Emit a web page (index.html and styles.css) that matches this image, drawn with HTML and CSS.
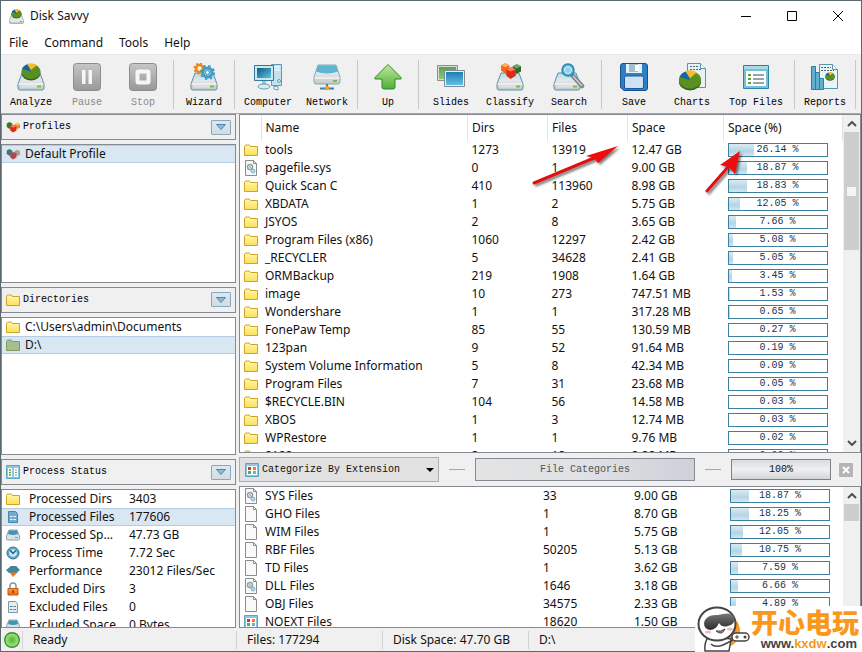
FILE: index.html
```html
<!DOCTYPE html>
<html lang="en">
<head>
    <meta charset="UTF-8">
    <meta name="viewport" content="width=device-width, initial-scale=1.0">
    <title>Disk Savvy</title>
    <link rel="stylesheet" href="styles.css">
</head>
<body>

<!-- Icon set -->
<svg class="sprite" aria-hidden="true">
    <defs>
        <linearGradient id="g-disk" x1="0" y1="0" x2="0" y2="1"><stop offset="0" stop-color="#b4dcea"/><stop offset="0.45" stop-color="#e4e6e8"/><stop offset="1" stop-color="#c4c8cb"/></linearGradient>
        <linearGradient id="g-gray" x1="0" y1="0" x2="0" y2="1"><stop offset="0" stop-color="#c6c6c6"/><stop offset="1" stop-color="#989898"/></linearGradient>
        <linearGradient id="g-blue" x1="0" y1="0" x2="1" y2="1"><stop offset="0" stop-color="#0d5c86"/><stop offset="1" stop-color="#5fc0e0"/></linearGradient>
        <linearGradient id="g-sky" x1="0" y1="0" x2="0" y2="1"><stop offset="0" stop-color="#1d7fb5"/><stop offset="1" stop-color="#62bfe4"/></linearGradient>
        <linearGradient id="g-leaf" x1="0" y1="0" x2="0" y2="1"><stop offset="0" stop-color="#5ba344"/><stop offset="1" stop-color="#8cc878"/></linearGradient>
        <linearGradient id="g-green" x1="0" y1="0" x2="0" y2="1"><stop offset="0" stop-color="#c4e8a0"/><stop offset="1" stop-color="#4db03a"/></linearGradient>
        <linearGradient id="g-folder" x1="0" y1="0" x2="0" y2="1"><stop offset="0" stop-color="#fff9b0"/><stop offset="1" stop-color="#fbe05c"/></linearGradient>
        <radialGradient id="g-ball"><stop offset="0" stop-color="#4dbb32"/><stop offset="1" stop-color="#a9e48d"/></radialGradient>
        <linearGradient id="g-lock" x1="0" y1="0" x2="0" y2="1"><stop offset="0" stop-color="#ffa23c"/><stop offset="1" stop-color="#e8650c"/></linearGradient>
        <linearGradient id="g-visor" x1="0" y1="0" x2="0" y2="1"><stop offset="0" stop-color="#777"/><stop offset="1" stop-color="#2c2c2c"/></linearGradient>
    </defs>

    <symbol id="disk" viewBox="0 0 28 28">
        <path d="M5 10h18l4 11v4q0 2-2 2H3q-2 0-2-2v-4z" fill="url(#g-disk)" stroke="#5794a8"/>
        <path d="M1.500 21h25" stroke="#fff"/>
        <path d="M4 22.500h20v2H4z" fill="#dfe3e5"/>
        <path d="M20 22.500h4v2h-4z" fill="#74c13a"/>
    </symbol>
    <symbol id="pie" viewBox="0 0 20 18">
        <ellipse cx="10" cy="10" rx="9.500" ry="7.500" fill="#38601a"/>
        <ellipse cx="10" cy="8.500" rx="9.500" ry="7.500" fill="#5a8f22"/>
        <path d="M10 8.500L1 6Q3 2 7 1z" fill="#1166a8"/>
        <path d="M10 7L6 1q5-2 10 1z" fill="#f8bb2e"/>
    </symbol>
    <symbol id="cubes" viewBox="0 0 20 16">
        <path d="M1 3l4-2 4 2v5l-4 3-4-3z" fill="#ee6b1c"/><path d="M1 3l4 2 4-2-4-2z" fill="#ffb35c"/>
        <path d="M12 4l4-2 4 2v5l-4 2-4-2z" fill="#2f6a2a"/><path d="M12 4l4 2 4-2-4-2z" fill="#6fa866"/>
        <path d="M6 7l5-2 4 2v6l-5 3-4-3z" fill="#dd2a16"/><path d="M6 7l4 2 5-2-4-2z" fill="#ff7a58"/>
    </symbol>

    <symbol id="analyze" viewBox="0 0 28 28"><use href="#disk"/><use href="#pie" x="4" y="0" width="20" height="18"/></symbol>
    <symbol id="pause" viewBox="0 0 28 28">
        <rect x="0.500" y="0.500" width="27" height="27" rx="3" fill="url(#g-gray)" stroke="#8e8e8e"/>
        <path d="M9 7h3.500v14H9zM15.500 7H19v14h-3.500z" fill="#f6f6f6"/>
    </symbol>
    <symbol id="stop" viewBox="0 0 28 28">
        <rect x="0.500" y="0.500" width="27" height="27" rx="3" fill="url(#g-gray)" stroke="#8e8e8e"/>
        <rect x="8.500" y="8.500" width="11" height="11" rx="1" fill="none" stroke="#f6f6f6" stroke-width="4"/>
    </symbol>
    <symbol id="wizard" viewBox="0 0 28 28">
        <use href="#disk"/>
        <circle cx="9.500" cy="5.500" r="3.500" fill="#fff0d8" stroke="#e9871e" stroke-width="2.500"/>
        <circle cx="9.500" cy="5.500" r="5" fill="none" stroke="#e9871e" stroke-width="2" stroke-dasharray="2 1.900"/>
        <circle cx="17.500" cy="9.500" r="4.500" fill="#c9edf8" stroke="#3d9cc8" stroke-width="3"/>
        <circle cx="17.500" cy="9.500" r="6.500" fill="none" stroke="#3d9cc8" stroke-width="2" stroke-dasharray="2.500 2.600"/>
        <circle cx="17.500" cy="9.500" r="2" fill="#fff" stroke="#2c7fab"/>
    </symbol>
    <symbol id="computer" viewBox="0 0 28 28">
        <path d="M17.500 1.500h10v21h-10z" fill="#c4e2ec" stroke="#5d9cb4"/>
        <path d="M19 4h7M19 7h7" stroke="#fff"/>
        <circle cx="25" cy="18" r="1.500" fill="#e8f6fa" stroke="#5d9cb4"/>
        <path d="M0.500 2.500h19v15h-19z" fill="#c9e8f2" stroke="#347a98"/>
        <path d="M3 5h14v10H3z" fill="url(#g-blue)"/>
        <path d="M8 18h4v4H8z" fill="#9cc6d4"/>
        <ellipse cx="10" cy="23.500" rx="6" ry="2.500" fill="#d8ebf1" stroke="#5d9cb4"/>
        <path d="M20 23l4 1v3l-4-1z" fill="#fff" stroke="#5d9cb4"/>
    </symbol>
    <symbol id="network" viewBox="0 0 28 28">
        <path d="M5 2h18l4 12v5q0 2-2 2H3q-2 0-2-2v-5z" fill="url(#g-disk)" stroke="#87a9b5"/>
        <path d="M5 2.500h18l2 6q-11 4-22 0z" fill="#5fb4d0"/>
        <path d="M1.500 15h25" stroke="#fff"/>
        <path d="M20 17h4v2h-4z" fill="#74c13a"/>
        <path d="M14 21v4M7 25.500h14" stroke="#2f86a8" stroke-width="2"/>
        <circle cx="14" cy="25" r="2.300" fill="#f39a31"/>
    </symbol>
    <symbol id="up" viewBox="0 0 28 28"><path d="M14 1.500L27 14.500v1.500h-6v8q0 2-2 2H10q-2 0-2-2v-8H1v-1.500z" fill="url(#g-green)" stroke="#2f8a1f" stroke-linejoin="round"/></symbol>
    <symbol id="slides" viewBox="0 0 28 28">
        <path d="M0.500 2.500h20v15h-20z" fill="#d8dcd8" stroke="#8c8f8c"/><path d="M2 4h17v12H2z" fill="url(#g-leaf)"/>
        <path d="M7.500 7.500h20v16h-20z" fill="#e8eef2" stroke="#7f8b93"/><path d="M9 9h17v13H9z" fill="url(#g-sky)"/>
    </symbol>
    <symbol id="classify" viewBox="0 0 28 28"><use href="#disk"/><use href="#cubes" x="4" y="-1" width="21" height="17"/></symbol>
    <symbol id="search" viewBox="0 0 32 28">
        <use href="#disk" width="28" height="28"/>
        <path d="M19 12l10 11" stroke="#7b858c" stroke-width="4.500" stroke-linecap="round"/>
        <path d="M20 13l9 10" stroke="#c7d0d5" stroke-width="1.500"/>
        <circle cx="15" cy="7" r="6" fill="#57b5d8" stroke="#2c88b0" stroke-width="1.500"/>
        <circle cx="15" cy="7" r="3.500" fill="#8cd3ea" stroke="#d8f1fa"/>
    </symbol>
    <symbol id="save" viewBox="0 0 28 28">
        <path d="M3 0.500h22q2.500 0 2.500 2.500v22q0 2.500-2.500 2.500H4l-3.500-3V3Q0.500 0.500 3 0.500z" fill="#2f7fc4" stroke="#174f8c"/>
        <path d="M6 1h16v9H6z" fill="#e4f1f6"/><path d="M9 1h9v8H9z" fill="#9fc0cc"/><path d="M15 2h4v6h-4z" fill="#fff"/>
        <rect x="4.500" y="13" width="19" height="12.500" rx="1.500" fill="#cfe2f5" stroke="#1c5a9c"/>
    </symbol>
    <symbol id="charts" viewBox="0 0 28 28">
        <path d="M9.500 0.500h13l5 5v19h-18z" fill="#e6f2f7" stroke="#5b93aa"/><path d="M22.500 0.500v5h5" fill="#fff" stroke="#5b93aa"/>
        <path d="M12 3.500h8M12 6.500h12" stroke="#4d6b7c" stroke-dasharray="2 1"/>
        <use href="#pie" x="0" y="7" width="24" height="21"/>
    </symbol>
    <symbol id="topfiles" viewBox="0 0 28 28">
        <path d="M1.500 2.500h25v23h-25z" fill="#79bfd8" stroke="#2a86a6"/><path d="M2 3h24v3H2z" fill="#a8dbea"/>
        <path d="M4 8h20v15H4z" fill="#fff"/>
        <path d="M6 12h3M6 16h3M6 20h3" stroke="#5aa52a" stroke-width="2"/>
        <path d="M11 12h11M11 16h11M11 20h11" stroke="#7b8794" stroke-width="1.500"/>
    </symbol>
    <symbol id="reports" viewBox="0 0 28 28">
        <path d="M8.500 1.500h13l5 5v19h-18z" fill="#e9f4f8" stroke="#5b93aa"/><path d="M21.500 1.500v5h5" fill="#fff" stroke="#5b93aa"/>
        <path d="M10 4.500h10M10 7.500h13" stroke="#4d6b7c" stroke-dasharray="2 1"/>
        <use href="#pie" x="14" y="9" width="10" height="9"/>
        <path d="M0.500 3.500h4v23h-4zM4.500 9.500h4v17h-4zM8.500 15.500h4v11h-4z" fill="#62aed0" stroke="#2f7c9e"/>
    </symbol>

    <symbol id="folder" viewBox="0 0 14 14"><path d="M0.500 3.500l1-1.500h4l1 1.500h7v9h-13z" fill="url(#g-folder)" stroke="#d2a21e"/></symbol>
    <symbol id="folder-sel" viewBox="0 0 14 14"><path d="M0.500 3.500l1-1.500h4l1 1.500h7v9h-13z" fill="#a7bd92" stroke="#7f9a5c"/></symbol>
    <symbol id="page" viewBox="0 0 14 16"><path d="M1.500 0.500h8l3 3v12h-11z" fill="#f9f9f9" stroke="#8c8c8c"/><path d="M9.500 0.500v3h3" fill="none" stroke="#8c8c8c"/></symbol>
    <symbol id="sysfile" viewBox="0 0 14 16">
        <use href="#page"/>
        <circle cx="6" cy="7" r="2.500" fill="none" stroke="#8fa0ab" stroke-width="1.500"/><circle cx="6" cy="7" r="0.800" fill="#71838f"/>
        <circle cx="9" cy="11" r="2" fill="#b5d8ea" stroke="#7fb2cc"/>
    </symbol>
    <symbol id="category" viewBox="0 0 14 14">
        <path d="M0.500 0.500h13v13h-13z" fill="#8fc8dd" stroke="#5aa5bf"/><path d="M2 3h10v9H2z" fill="#fff"/>
        <path d="M3 4h3v3H3z" fill="#d8322c"/><path d="M8 4h3v3H8z" fill="#f07c3a"/><path d="M3 8h3v3H3z" fill="#4fb83a"/><path d="M8 8h3v3H8z" fill="#7aa9ea"/>
    </symbol>
    <symbol id="columns" viewBox="0 0 14 14">
        <path d="M0.500 0.500h13v13h-13z" fill="#8fc8dd" stroke="#5aa5bf"/><path d="M2 3h4v9H2zM8 3h4v9H8z" fill="#fff"/>
        <path d="M3 5h2M3 7.500h2M3 10h2" stroke="#5aa52a" stroke-width="1.500"/><path d="M9 5h2M9 7.500h2M9 10h2" stroke="#8794a0"/>
    </symbol>
    <symbol id="doc-blue" viewBox="0 0 14 14"><path d="M2.500 1.500h7l2 2v9h-9z" fill="#74acd0" stroke="#4686ac"/><path d="M4 6.500h6M4 9.500h6" stroke="#eaf4fa" stroke-dasharray="2.500 1"/></symbol>
    <symbol id="doc-gray" viewBox="0 0 14 14"><path d="M2.500 1.500h7l2 2v9h-9z" fill="#e6edf1" stroke="#7d97a3"/><path d="M4 6.500h6M4 9.500h6" stroke="#5d7f90" stroke-dasharray="2.500 1"/></symbol>
    <symbol id="drive" viewBox="0 0 14 14"><path d="M3 2h8l2.500 6v3q0 1-1 1h-11q-1 0-1-1V8z" fill="#dce1e4" stroke="#8aa2ac"/><path d="M3 2.500h8l1 3.500q-5 2-10 0z" fill="#3f95b6"/><path d="M9 9.500h3" stroke="#6fbb38"/></symbol>
    <symbol id="clock" viewBox="0 0 14 14"><circle cx="7" cy="7" r="6" fill="#5aa9c8" stroke="#2f7594"/><circle cx="7" cy="7" r="3.800" fill="#cfeaf4"/><path d="M4 4l3 3.500L10 4.500" fill="none" stroke="#22617e" stroke-width="1.500"/></symbol>
    <symbol id="perf" viewBox="0 0 14 14"><path d="M3 8l4 5 5-5z" fill="#ee7b20"/><path d="M0 6l5-4h5l4 4-4 3-2-1-1 2-1-2-3 1z" fill="#3c86a6"/><path d="M5 2h5l1 2H4z" fill="#6c7478"/></symbol>
    <symbol id="lock" viewBox="0 0 14 14"><path d="M4 7V4q0-3 3-3t3 3v3" fill="none" stroke="#8b949a" stroke-width="1.500"/><path d="M2 6.500h10v6.500H2z" fill="url(#g-lock)" stroke="#c8580c"/><path d="M7 8v3" stroke="#7c3404" stroke-width="1.500"/></symbol>
    <symbol id="cubes-sel" viewBox="0 0 20 16">
        <path d="M1 3l4-2 4 2v5l-4 3-4-3z" fill="#3b7f6c"/><path d="M12 4l4-2 4 2v5l-4 2-4-2z" fill="#b49a82"/><path d="M6 7l5-2 4 2v6l-5 3-4-3z" fill="#b04a52"/>
    </symbol>
    <symbol id="cubes-small" viewBox="0 0 20 16">
        <path d="M1 3l4-2 4 2v5l-4 3-4-3z" fill="#2f7d2c"/><path d="M12 4l4-2 4 2v5l-4 2-4-2z" fill="#f08a24"/><path d="M12 4l4 2 4-2-4-2z" fill="#ffc070"/><path d="M6 7l5-2 4 2v6l-5 3-4-3z" fill="#dd2a16"/><path d="M6 7l4 2 5-2-4-2z" fill="#ff7a58"/>
    </symbol>
    <symbol id="ready" viewBox="0 0 16 16"><circle cx="8" cy="8" r="7.300" fill="url(#g-ball)" stroke="#3c8f2a" stroke-width="1.400"/><circle cx="8" cy="8" r="5" fill="none" stroke="#8fd873"/></symbol>
    <symbol id="chevron" viewBox="0 0 10 6"><path d="M0.500 0.500h9L5 5.500z" fill="#8fbbd8" stroke="#4f87ab"/></symbol>
</svg>

<div class="window">
    <header class="titlebar">
        <svg class="app-icon"><use href="#analyze"/></svg>
        <h1>Disk Savvy</h1>
        <div class="window-buttons">
            <button type="button" aria-label="Minimize"><svg viewBox="0 0 12 12"><path d="M1 6.500h10"/></svg></button>
            <button type="button" aria-label="Maximize"><svg viewBox="0 0 12 12"><path d="M1.500 1.500h9v9h-9z"/></svg></button>
            <button type="button" aria-label="Close"><svg viewBox="0 0 12 12"><path d="M1 1l10 10M11 1L1 11"/></svg></button>
        </div>
    </header>

    <nav class="menubar">
        <button type="button">File</button>
        <button type="button">Command</button>
        <button type="button">Tools</button>
        <button type="button">Help</button>
    </nav>

    <!-- Toolbar -->
    <div class="toolbar">
        <div class="group">
            <button type="button"><svg><use href="#analyze"/></svg>Analyze</button>
            <button type="button" disabled><svg><use href="#pause"/></svg>Pause</button>
            <button type="button" disabled><svg><use href="#stop"/></svg>Stop</button>
        </div>
        <div class="group">
            <button type="button"><svg><use href="#wizard"/></svg>Wizard</button>
        </div>
        <div class="group">
            <button type="button"><svg><use href="#computer"/></svg>Computer</button>
            <button type="button"><svg><use href="#network"/></svg>Network</button>
        </div>
        <div class="group">
            <button type="button"><svg><use href="#up"/></svg>Up</button>
        </div>
        <div class="group wide">
            <button type="button"><svg><use href="#slides"/></svg>Slides</button>
            <button type="button"><svg><use href="#classify"/></svg>Classify</button>
            <button type="button"><svg><use href="#search"/></svg>Search</button>
        </div>
        <div class="group wide spaced">
            <button type="button"><svg><use href="#save"/></svg>Save</button>
            <button type="button"><svg><use href="#charts"/></svg>Charts</button>
            <button type="button"><svg><use href="#topfiles"/></svg>Top Files</button>
        </div>
        <div class="group">
            <button type="button"><svg><use href="#reports"/></svg>Reports</button>
        </div>
    </div>

    <div class="main">
        <aside class="sidebar">
            <div class="panel-header">
                <svg class="icon"><use href="#cubes-small"/></svg>
                <h2>Profiles</h2>
                <button type="button" aria-label="Profiles menu"><svg><use href="#chevron"/></svg></button>
            </div>
            <ul class="panel">
                <li class="selected"><svg class="icon"><use href="#cubes-sel"/></svg>Default Profile</li>
            </ul>

            <div class="panel-header">
                <svg class="icon"><use href="#folder"/></svg>
                <h2>Directories</h2>
                <button type="button" aria-label="Directories menu"><svg><use href="#chevron"/></svg></button>
            </div>
            <ul class="panel">
                <li><svg class="icon"><use href="#folder"/></svg>C:\Users\admin\Documents</li>
                <li class="selected"><svg class="icon"><use href="#folder-sel"/></svg>D:\</li>
            </ul>

            <div class="panel-header">
                <svg class="icon"><use href="#columns"/></svg>
                <h2>Process Status</h2>
                <button type="button" aria-label="Process status menu"><svg><use href="#chevron"/></svg></button>
            </div>
            <div class="panel">
                <table class="status-table">
                    <tbody id="status_rows"></tbody>
                </table>
            </div>
        </aside>

        <main class="content">
            <section class="list">
                <div class="list-body">
                    <table class="files">
                        <thead>
                            <tr>
                                <th class="c-icon"></th>
                                <th>Name</th>
                                <th class="c-dirs">Dirs</th>
                                <th class="c-files">Files</th>
                                <th class="c-space">Space</th>
                                <th class="c-bar">Space (%)</th>
                            </tr>
                        </thead>
                        <tbody id="file_rows"></tbody>
                    </table>
                </div>
                <div class="scrollbar">
                    <svg viewBox="0 0 10 6"><path d="M1 5l4-4 4 4"/></svg>
                    <div class="track"><div class="thumb"><span class="grip"></span></div></div>
                    <svg viewBox="0 0 10 6"><path d="M1 1l4 4 4-4"/></svg>
                </div>
            </section>

            <div class="category-bar">
                <div class="category-select">
                    <svg class="icon"><use href="#category"/></svg>
                    <select aria-label="Categorize">
                        <option>Categorize By Extension</option>
                    </select>
                    <svg class="arrow" viewBox="0 0 8 4"><path d="M0 0h8L4 4z"/></svg>
                </div>
                <span class="dash"></span>
                <button type="button" class="title-button">File Categories</button>
                <span class="dash"></span>
                <button type="button" class="percent-button">100%</button>
                <button type="button" class="close-button" aria-label="Close categories"><svg viewBox="0 0 14 14"><path d="M4 4l6 6M10 4l-6 6"/></svg></button>
            </div>

            <section class="list list-small">
                <div class="list-body">
                    <table class="categories">
                        <tbody id="category_rows"></tbody>
                    </table>
                </div>
                <div class="scrollbar">
                    <svg viewBox="0 0 10 6"><path d="M1 5l4-4 4 4"/></svg>
                    <div class="track"><div class="thumb"></div></div>
                    <svg viewBox="0 0 10 6"><path d="M1 1l4 4 4-4"/></svg>
                </div>
            </section>
        </main>
    </div>

    <footer class="statusbar">
        <svg><use href="#ready"/></svg>
        <span class="s-ready">Ready</span>
        <span class="s-files">Files: 177294</span>
        <span class="s-files">Disk Space: 47.70 GB</span>
        <span class="s-path">D:\</span>
    </footer>
</div>

<!-- Red pointers over the list -->
<svg class="pointers" viewBox="0 0 220 60" aria-hidden="true">
    <path d="M4 43L64 18" stroke="#e01010" stroke-width="3" stroke-linecap="round"/>
    <path d="M88 6L68 23l-4-5-8-2z" fill="#f00c0c"/>
    <path d="M177 51L198 27" stroke="#e01010" stroke-width="3" stroke-linecap="round"/>
    <path d="M210 11L205 34l-6-7-9-2z" fill="#f00c0c"/>
</svg>

<div class="watermark">
    <svg viewBox="0 0 56 46" aria-hidden="true">
        <circle cx="28" cy="25" r="17" fill="#f9981c"/>
        <path d="M14 30Q9 36 10 45h24l2-12z" fill="#fff" stroke="#444" stroke-width="1.500"/>
        <ellipse cx="22" cy="18" rx="18.500" ry="16.500" fill="#fff" stroke="#444" stroke-width="2"/>
        <path d="M9 17Q11 8 23 9q13-4 16 2 2 7-6 9-6 2-9-3-3 7-9 7-6-1-6-7z" fill="url(#g-visor)"/>
        <ellipse cx="13" cy="26" rx="3" ry="1.500" fill="#f8b8b8"/><ellipse cx="35" cy="23" rx="3" ry="1.500" fill="#f8b8b8"/>
        <path d="M21 25q5 1 9-2-3 7-9 2z" fill="#e87090" stroke="#444"/>
        <path d="M16 38q4 4 12 1l10-5" fill="none" stroke="#444" stroke-width="1.500"/>
        <rect x="37" y="27" width="17" height="8" rx="4" fill="#fff" stroke="#444" stroke-width="1.500"/>
        <path d="M40 31h4M42 29v4" stroke="#444"/><circle cx="50" cy="31" r="1.500" fill="#444"/>
    </svg>
    <div class="watermark-text">
        <strong lang="zh">开心电玩</strong>
        <span>www.<b>kxdw</b>.com</span>
    </div>
</div>

<script src="script.js"></script>
</body>
</html>
```
FILE: styles.css
```css
* {
    box-sizing: border-box;
}
body {
    margin: 0;
    font-family: "Noto Sans", "Open Sans", sans-serif;
    font-size: 12px;
    line-height: 18px;
    color: #111;
}
h1, h2, ul {
    margin: 0;
    padding: 0;
    font-size: inherit;
    font-weight: normal;
    list-style: none;
}
button, select {
    margin: 0;
    padding: 0;
    border: 0;
    background: none;
    color: inherit;
    font: inherit;
}
svg {
    display: block;
    flex: none;
}
.sprite {
    position: absolute;
    width: 0;
    height: 0;
}
.icon {
    width: 14px;
    height: 14px;
}
.window {
    display: flex;
    flex-direction: column;
    height: 100vh;
    background: #f0f0f0;
    border: 1px solid #5c6870;
    overflow: hidden;
}

/* Title and menu */
.titlebar {
    display: flex;
    align-items: center;
    flex: none;
    height: 30px;
    padding-left: 8px;
    gap: 6px;
    background: #fff;
}
.app-icon {
    width: 15px;
    height: 15px;
}
.window-buttons {
    display: flex;
    margin-left: auto;
}
.window-buttons button {
    display: flex;
    align-items: center;
    justify-content: center;
    width: 46px;
    height: 30px;
}
.window-buttons svg {
    width: 12px;
    height: 12px;
    fill: none;
    stroke: #000;
}
.menubar {
    display: flex;
    align-items: center;
    flex: none;
    height: 24px;
    padding-left: 8px;
    gap: 16px;
    background: #fff;
    border-bottom: 1px solid #e8e8e8;
}

/* Toolbar */
.toolbar {
    display: flex;
    flex: none;
    height: 59px;
    padding: 5px 0 4px;
    border-bottom: 1px solid #a8a8a8;
}
.group {
    display: flex;
    padding: 0 2px;
    border-right: 1px solid #c8c8c8;
}
.wide {
    padding: 0 4px;
}
.spaced {
    gap: 2px;
}
.toolbar button {
    display: flex;
    flex-direction: column;
    align-items: center;
    gap: 3px;
    min-width: 56px;
    padding: 3px 7px 0;
    font-family: "Liberation Mono", monospace;
    font-size: 10px;
    white-space: nowrap;
    color: #000;
}
.toolbar button:disabled {
    color: #8a8a8a;
}
.toolbar svg {
    width: 32px;
    height: 28px;
}

/* Side panels */
.main {
    display: flex;
    flex: 1;
    min-height: 0;
    gap: 3px;
}
.sidebar {
    display: flex;
    flex-direction: column;
    flex: none;
    width: 235px;
    gap: 4px;
}
.panel-header {
    display: flex;
    align-items: center;
    flex: none;
    height: 26px;
    padding: 0 4px;
    gap: 3px;
    border: 1px solid #858991;
    font-family: "Liberation Mono", monospace;
    font-size: 10px;
    color: #000;
}
.panel-header button {
    display: flex;
    align-items: center;
    justify-content: center;
    width: 20px;
    height: 15px;
    margin-left: auto;
    border: 1px solid #86a9c0;
    border-radius: 1px;
    background: linear-gradient(#dce9f0, #d2dce2);
}
.panel-header button svg {
    width: 10px;
    height: 6px;
}
.panel {
    flex: 1;
    min-height: 0;
    overflow: hidden;
    background: #fff;
    border: 1px solid #858991;
}
.panel li {
    display: flex;
    align-items: center;
    height: 18px;
    padding-left: 4px;
    gap: 5px;
}
.selected {
    background: #d9e7f3;
    box-shadow: inset 0 1px #b4cde2, inset 0 -1px #b4cde2;
}
table {
    width: 100%;
    border-collapse: collapse;
    table-layout: fixed;
}
td, th {
    height: 18px;
    padding: 0 0 0 4px;
    font-weight: normal;
    text-align: left;
    white-space: nowrap;
    overflow: hidden;
    text-overflow: ellipsis;
}
.status-table td:nth-child(1) {
    width: 23px;
}
.status-table td:nth-child(2) {
    width: 98px;
    padding-right: 4px;
}
.status-table td:nth-child(3) {
    padding-left: 6px;
}

/* File lists */
.content {
    display: flex;
    flex-direction: column;
    flex: 1;
    min-width: 0;
}
.list {
    display: flex;
    flex: 1;
    min-height: 0;
    background: #fff;
    border: 1px solid #858991;
}
.list-small {
    flex: none;
    height: 142px;
}
.list-body {
    flex: 1;
    min-width: 0;
    overflow: hidden;
}
th {
    height: 26px;
    border-right: 1px solid #e4e4e4;
}
td svg {
    width: 14px;
    height: 16px;
}
.c-icon {
    width: 21px;
}
.c-dirs {
    width: 80px;
}
.c-files {
    width: 80px;
}
.c-space {
    width: 96px;
}
.c-bar {
    width: 119px;
}
.categories td:nth-child(1) {
    width: 21px;
}
.categories td:nth-child(3) {
    width: 91px;
}
.categories td:nth-child(4) {
    width: 96px;
}
.categories td:nth-child(5) {
    width: 117px;
}
.bar {
    position: relative;
    width: 100px;
    height: 14px;
    border: 1px solid #3b7fa3;
    background: #fff;
    font-family: "Liberation Mono", monospace;
    font-size: 10px;
    line-height: 12px;
    text-align: center;
    color: #1c3450;
}
.fill {
    position: absolute;
    left: 0;
    top: 0;
    bottom: 0;
    background: linear-gradient(#d9ebf4, #b4d4e4 60%, #d3e6ef);
}
.bar span {
    position: relative;
}
.scrollbar {
    display: flex;
    flex-direction: column;
    align-items: center;
    flex: none;
    width: 17px;
    padding: 6px 0;
    gap: 5px;
    background: #f0f0f0;
}
.scrollbar svg {
    width: 10px;
    height: 6px;
    fill: none;
    stroke: #505050;
    stroke-width: 2;
}
.track {
    flex: 1;
    width: 15px;
    min-height: 0;
}
.thumb {
    display: flex;
    align-items: center;
    justify-content: center;
    height: 39%;
    background: #cdcdcd;
}
.list-small .thumb {
    height: 17px;
}
.grip {
    width: 9px;
    height: 9px;
    background: #f4f4f4;
}

/* Category bar */
.category-bar {
    display: flex;
    align-items: center;
    flex: none;
    height: 33px;
    padding-right: 8px;
    font-family: "Liberation Mono", monospace;
    font-size: 10px;
}
.category-select {
    display: flex;
    align-items: center;
    position: relative;
    width: 200px;
    height: 25px;
    padding-left: 5px;
    background: #e1e1e1;
    border: 1px solid #adadad;
}
.category-select select {
    flex: 1;
    height: 23px;
    padding-left: 3px;
    appearance: none;
}
.category-select .arrow {
    position: absolute;
    right: 4px;
    width: 8px;
    height: 4px;
    pointer-events: none;
}
.dash {
    flex: none;
    width: 16px;
    height: 1px;
    margin: 0 10px;
    background: #a8a8a8;
}
.title-button {
    flex: 1;
    height: 23px;
    border: 1px solid #858991;
    background: linear-gradient(to right, #e3e3e3, #dfe1e6 50%, #cfd0d8);
    color: #555;
}
.percent-button {
    width: 100px;
    height: 21px;
    border: 1px solid #7c8288;
    background: linear-gradient(#d9dcde, #eef0f1 50%, #d2d5d8);
}
.close-button {
    width: 14px;
    height: 14px;
    margin-left: 8px;
    background: #b4b4b4;
    border-radius: 1px;
}
.close-button svg {
    width: 14px;
    height: 14px;
    stroke: #fff;
    stroke-width: 2;
}

/* Status bar */
.statusbar {
    display: flex;
    align-items: center;
    flex: none;
    height: 23px;
    padding-left: 3px;
}
.statusbar svg {
    width: 16px;
    height: 16px;
}
.statusbar span {
    margin-left: 2px;
    padding-left: 10px;
    border-left: 1px solid #d2d2d2;
}
.statusbar .s-ready {
    width: 212px;
}
.statusbar .s-files {
    width: 144px;
}

/* Overlays */
.pointers {
    position: absolute;
    left: 530px;
    top: 140px;
    width: 220px;
    height: 60px;
    fill: none;
    filter: drop-shadow(2px 2px 1px rgba(0, 0, 0, 0.5));
    pointer-events: none;
}
.watermark {
    position: absolute;
    right: 0;
    bottom: 0;
    display: flex;
    width: 167px;
    height: 46px;
    background: #fff;
    color: #444;
}
.watermark svg {
    width: 56px;
    height: 46px;
}
.watermark-text {
    display: flex;
    flex-direction: column;
    align-items: flex-end;
}
.watermark strong {
    font-family: "Noto Sans CJK SC", sans-serif;
    font-size: 27px;
    font-weight: 900;
    line-height: 31px;
    color: #f9981c;
}
.watermark span {
    padding-right: 2px;
    font-family: "Liberation Sans", sans-serif;
    font-size: 13px;
    font-weight: bold;
    line-height: 13px;
}
.watermark b {
    color: #f9981c;
}
```
FILE: script.js
```js
const files = [
    ['folder', 'tools', '1273', '13919', '12.47 GB', 26.14],
    ['sysfile', 'pagefile.sys', '0', '1', '9.00 GB', 18.87],
    ['folder', 'Quick Scan C', '410', '113960', '8.98 GB', 18.83],
    ['folder', 'XBDATA', '1', '2', '5.75 GB', 12.05],
    ['folder', 'JSYOS', '2', '8', '3.65 GB', 7.66],
    ['folder', 'Program Files (x86)', '1060', '12297', '2.42 GB', 5.08],
    ['folder', '_RECYCLER', '5', '34628', '2.41 GB', 5.05],
    ['folder', 'ORMBackup', '219', '1908', '1.64 GB', 3.45],
    ['folder', 'image', '10', '273', '747.51 MB', 1.53],
    ['folder', 'Wondershare', '1', '1', '317.28 MB', 0.65],
    ['folder', 'FonePaw Temp', '85', '55', '130.59 MB', 0.27],
    ['folder', '123pan', '9', '52', '91.64 MB', 0.19],
    ['folder', 'System Volume Information', '5', '8', '42.34 MB', 0.09],
    ['folder', 'Program Files', '7', '31', '23.68 MB', 0.05],
    ['folder', '$RECYCLE.BIN', '104', '56', '14.58 MB', 0.03],
    ['folder', 'XBOS', '1', '3', '12.74 MB', 0.03],
    ['folder', 'WPRestore', '1', '1', '9.76 MB', 0.02],
    ['folder', '8128', '2', '18', '8.88 MB', 0.02]
];

const categories = [
    ['sysfile', 'SYS Files', '33', '9.00 GB', 18.87],
    ['page', 'GHO Files', '1', '8.70 GB', 18.25],
    ['page', 'WIM Files', '1', '5.75 GB', 12.05],
    ['page', 'RBF Files', '50205', '5.13 GB', 10.75],
    ['page', 'TD Files', '1', '3.62 GB', 7.59],
    ['sysfile', 'DLL Files', '1646', '3.18 GB', 6.66],
    ['page', 'OBJ Files', '34575', '2.33 GB', 4.89],
    ['category', 'NOEXT Files', '18620', '1.50 GB']
];

const stats = [
    ['folder', 'Processed Dirs', '3403'],
    ['doc-blue', 'Processed Files', '177606'],
    ['drive', 'Processed Space', '47.73 GB'],
    ['clock', 'Process Time', '7.72 Sec'],
    ['perf', 'Performance', '23012 Files/Sec'],
    ['lock', 'Excluded Dirs', '3'],
    ['doc-gray', 'Excluded Files', '0'],
    ['drive', 'Excluded Space', '0 Bytes']
];

function cell(value, index) {
    if (index === 0) {
        return '<td><svg><use href="#' + value + '"/></svg></td>';
    }
    if (typeof value === 'number') {
        return '<td><div class="bar"><div class="fill" style="width:' + value + '%"></div><span>' + value.toFixed(2) + ' %</span></div></td>';
    }
    return '<td>' + value + '</td>';
}

function fillTable(id, rows, selected) {
    document.getElementById(id).innerHTML = rows.map((row, i) =>
        '<tr' + (i === selected ? ' class="selected"' : '') + '>' + row.map(cell).join('') + '</tr>'
    ).join('');
}

fillTable('file_rows', files);
fillTable('category_rows', categories);
fillTable('status_rows', stats, 1);
```
